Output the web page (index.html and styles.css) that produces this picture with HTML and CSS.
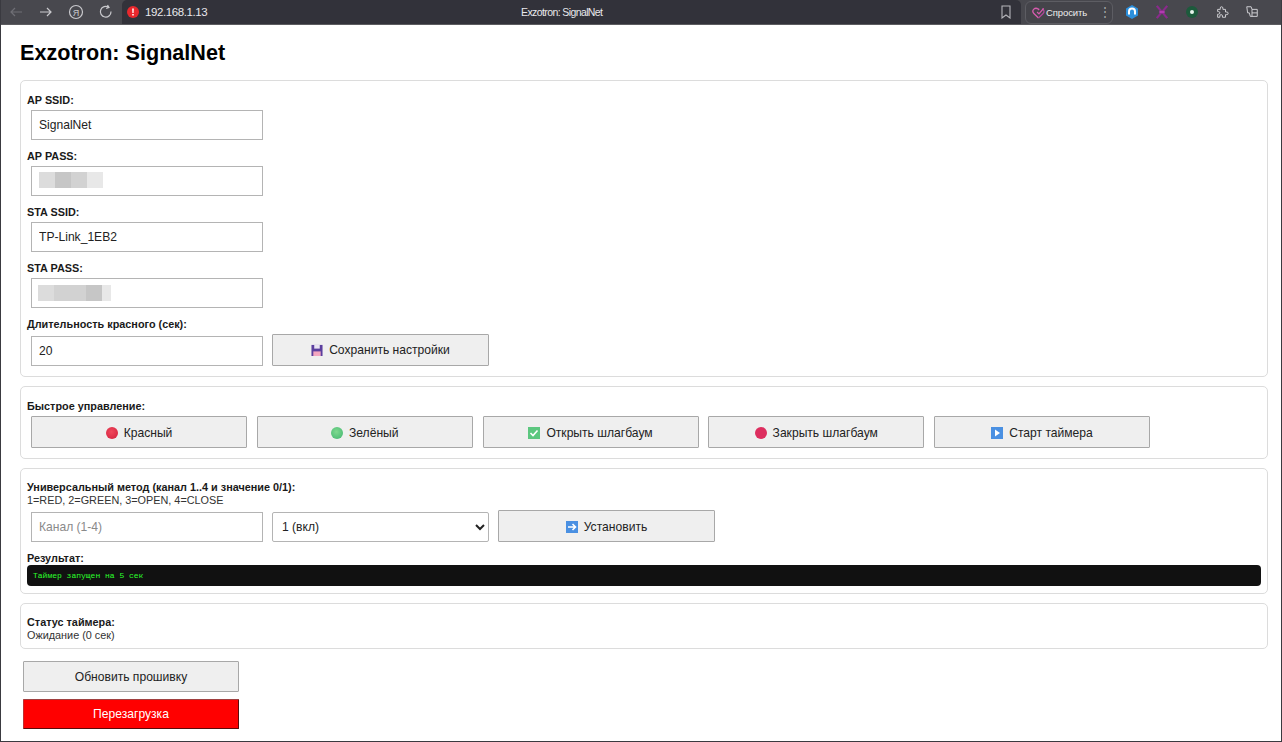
FILE: index.html
```html
<!DOCTYPE html>
<html lang="ru">

<head>
  <meta charset="UTF-8">
  <meta name="viewport" content="width=device-width, initial-scale=1.0">
  <title>Exzotron: SignalNet</title>
  <link rel="stylesheet" href="styles.css">
</head>

<body>
  <header class="toolbar">
    <div class="nav-icons">
      <svg class="nav-icon nav-off" viewBox="0 0 16 16"><path d="M14 8H3M7 4 3 8l4 4"/></svg>
      <svg class="nav-icon" viewBox="0 0 16 16"><path d="M2 8h11M9 4l4 4-4 4"/></svg>
      <svg class="nav-icon" viewBox="0 0 16 16"><circle cx="8" cy="8" r="6.500"/><text class="nav-ya" x="8" y="11.500" text-anchor="middle">Я</text></svg>
      <svg class="nav-icon" viewBox="0 0 16 16"><path d="M13 7.500a5.300 5.300 0 1 1-2.400-4.200M9.500 1l1.500 2.500-2.800 1"/></svg>
    </div>
    <div class="address">
      <div class="address-left">
        <svg class="alert" viewBox="0 0 12 12"><circle cx="6" cy="6" r="6" fill="#e8282d"/><path d="M5.200 2.400h1.600l-.2 4.600H5.400zM5.200 8h1.600v1.600H5.200z" fill="#fff"/></svg>
        <span class="url">192.168.1.13</span>
      </div>
      <span class="page-title">Exzotron: SignalNet</span>
      <svg class="bookmark" viewBox="0 0 12 14"><path d="M2 1h8v12L6 10l-4 3z"/></svg>
    </div>
    <div class="ask">
      <svg class="ask-icon" viewBox="0 0 14 14"><path d="M7 13 2 8a3.200 3.200 0 0 1 4.600-4.600l.4.4.8-.8"/><path d="M11 3a3 3 0 0 1 1 5l-5 5" stroke="#b0479a"/><path d="M5.500 6.500 7.500 8.500 12.500 2.500"/></svg>
      <span class="ask-text">Спросить</span>
      <span class="ask-more">⋮</span>
    </div>
    <div class="ext-icons">
      <svg class="ext" viewBox="0 0 14 14"><path d="M7 0l6 3.500v7L7 14l-6-3.500v-7z" fill="#2b8fdc"/><path d="M4 9.500V6.500a3 3 0 0 1 6 0v3" fill="none" stroke="#fff" stroke-width="2"/></svg>
      <svg class="ext ext-cross" viewBox="0 0 16 16"><path d="M2 1l12 14M14 1 2 15"/><path d="M5 8h6" stroke="#b23bb0"/></svg>
      <svg class="ext" viewBox="0 0 14 14"><circle cx="7" cy="7" r="6" fill="#1d5a3c"/><circle cx="7" cy="7" r="2" fill="#e8f5ec"/></svg>
      <svg class="ext ext-line" viewBox="0 0 16 16"><path d="M3 5h3V3.500a1.500 1.500 0 0 1 3 0V5h3v3h1.500a1.500 1.500 0 0 1 0 3H12v3H8.500v-1.500a1.500 1.500 0 0 0-3 0V14H3v-3.500h1a1.500 1.500 0 0 0 0-3H3z"/></svg>
      <svg class="ext ext-line" viewBox="0 0 16 16"><path d="M2 2h5l1 3h6v8H6L5 9H3zM8 5v8M8 9h6"/></svg>
    </div>
  </header>

  <main class="page">
    <h1 class="title">Exzotron: SignalNet</h1>

    <section class="card card-settings">
      <label class="label">AP SSID:</label>
      <input class="field" type="text" value="SignalNet">
      <label class="label">AP PASS:</label>
      <div class="secret">
        <input class="field" type="text">
        <div class="mosaic mosaic-ap"><i class="m2"></i><i class="m4"></i><i class="m3"></i><i class="m1"></i></div>
      </div>
      <label class="label">STA SSID:</label>
      <input class="field" type="text" value="TP-Link_1EB2">
      <label class="label">STA PASS:</label>
      <div class="secret">
        <input class="field" type="text">
        <div class="mosaic mosaic-sta"><i class="m2"></i><i class="m3"></i><i class="m3"></i><i class="m4"></i><i class="m1 tile-end"></i></div>
      </div>
      <label class="label">Длительность красного (сек):</label>
      <div class="row">
        <input class="field" type="text" value="20">
        <button class="btn btn-wide">
          <svg class="emoji" viewBox="0 0 12 13"><path d="M0 1h12v12H0z" fill="#5b3f9e"/><path d="M3 1h6v4H3z" fill="#e9e4f2"/><path d="M2 8h8v5H2z" fill="#f3a6c0"/></svg>
          Сохранить настройки
        </button>
      </div>
    </section>

    <section class="card card-quick">
      <label class="label">Быстрое управление:</label>
      <div class="row row-quick">
        <button class="btn"><span class="dot dot-red"></span>Красный</button>
        <button class="btn"><span class="dot dot-green"></span>Зелёный</button>
        <button class="btn">
          <svg class="emoji" viewBox="0 0 12 12"><path d="M0 0h12v12H0z" fill="#5cc77f"/><path d="M2.500 6l2.500 2.500 4.500-5" fill="none" stroke="#fff" stroke-width="1.600"/></svg>
          Открыть шлагбаум
        </button>
        <button class="btn"><span class="dot dot-crimson"></span>Закрыть шлагбаум</button>
        <button class="btn">
          <svg class="emoji" viewBox="0 0 12 12"><path d="M0 0h12v12H0z" fill="#4a90e2"/><path d="M4 2.500 9 6l-5 3.500z" fill="#fff"/></svg>
          Старт таймера
        </button>
      </div>
    </section>

    <section class="card card-method">
      <label class="label">Универсальный метод (канал 1..4 и значение 0/1):</label>
      <div class="hint">1=RED, 2=GREEN, 3=OPEN, 4=CLOSE</div>
      <div class="row row-method">
        <input class="field" type="text" placeholder="Канал (1-4)">
        <select class="field field-select">
          <option>1 (вкл)</option>
          <option>0 (выкл)</option>
        </select>
        <button class="btn btn-wide">
          <svg class="emoji" viewBox="0 0 12 12"><path d="M0 0h12v12H0z" fill="#4a90e2"/><path d="M2 6h7M6.500 3 9.500 6l-3 3" fill="none" stroke="#fff" stroke-width="1.600"/></svg>
          Установить
        </button>
      </div>
      <label class="label label-result">Результат:</label>
      <pre class="output">Таймер запущен на 5 сек</pre>
    </section>

    <section class="card card-status">
      <label class="label">Статус таймера:</label>
      <div class="hint">Ожидание (0 сек)</div>
    </section>

    <div class="actions">
      <button class="btn btn-update">Обновить прошивку</button>
      <button class="btn btn-reboot">Перезагрузка</button>
    </div>
  </main>
</body>

</html>
```

FILE: styles.css
```css
* {
  margin: 0;
  padding: 0;
  box-sizing: border-box;
}

html,
body {
  height: 742px;
  overflow: hidden;
}

body {
  font-family: "Liberation Sans", Arial, sans-serif;
  font-size: 12px;
  color: #222;
  background: #fff;
  border-left: 1px solid #3a3a40;
  border-right: 1px solid #3a3a40;
  border-bottom: 1px solid #3a3a40;
}

/* browser bar */
.toolbar {
  display: flex;
  align-items: center;
  height: 25px;
  margin-left: -1px;
  margin-right: -1px;
  background: #48484e;
  border-bottom: 1px solid #5c5c60;
  color: #e4e4e8;
}

.nav-icons {
  display: flex;
  align-items: center;
  gap: 14px;
  width: 122px;
  padding-left: 8px;
  flex-shrink: 0;
}

.nav-icon {
  width: 16px;
  height: 16px;
  flex-shrink: 0;
  fill: none;
  stroke: #c9c9cd;
  stroke-width: 1.200;
}

.nav-off {
  stroke: #6f6f75;
}

.nav-ya {
  fill: #c9c9cd;
  stroke: none;
  font-family: "Liberation Sans", Arial, sans-serif;
  font-size: 9px;
}

.address {
  display: flex;
  align-items: center;
  width: 899px;
  height: 24px;
  padding: 0 9px 0 5px;
  background: #32323a;
  border-radius: 5px 5px 0 0;
  flex-shrink: 0;
}

.address-left {
  display: flex;
  align-items: center;
  gap: 6px;
  width: 394px;
}

.alert {
  width: 12px;
  height: 12px;
}

.url {
  font-size: 11.500px;
  letter-spacing: -0.4px;
  color: #e8e8ec;
}

.page-title {
  font-size: 10.500px;
  letter-spacing: -0.6px;
  color: #e8e8ec;
}

.bookmark {
  width: 12px;
  height: 14px;
  margin-left: auto;
  fill: none;
  stroke: #b5b5ba;
  stroke-width: 1.100;
}

.ask {
  display: flex;
  align-items: center;
  width: 88px;
  height: 23px;
  margin-left: 4px;
  padding-left: 6px;
  border: 1px solid #5d5d63;
  border-radius: 6px;
  background: #44444a;
  flex-shrink: 0;
}

.ask-icon {
  width: 13px;
  height: 13px;
  fill: none;
  stroke: #d65cae;
  stroke-width: 1.400;
}

.ask-text {
  margin-left: 1px;
  font-size: 9.500px;
  letter-spacing: -0.1px;
  color: #eee;
}

.ask-more {
  margin-left: 12px;
  font-size: 12px;
  color: #aaa;
}

.ext-icons {
  display: flex;
  align-items: center;
  gap: 16px;
  margin-left: 12px;
}

.ext {
  width: 14px;
  height: 14px;
  flex-shrink: 0;
}

.ext-cross {
  fill: none;
  stroke: #8a2a8c;
  stroke-width: 2.600;
}

.ext-line {
  fill: none;
  stroke: #d0d0d4;
  stroke-width: 1.100;
}

/* page */
.page {
  padding: 0 13px 0 19px;
}

.title {
  height: 55px;
  font-size: 21.600px;
  line-height: 56px;
  color: #000;
}

.card {
  margin-bottom: 9px;
  padding: 0 6px;
  border: 1px solid #dcdcdc;
  border-radius: 5px;
}

.card-settings {
  height: 297px;
  padding-top: 13px;
}

.card-quick {
  height: 73px;
  padding-top: 13px;
}

.card-method {
  height: 126px;
  padding-top: 12px;
}

.card-status {
  height: 46px;
  padding-top: 12px;
}

.label {
  display: block;
  height: 13px;
  font-size: 10.850px;
  line-height: 13px;
  font-weight: bold;
  color: #1a1a1a;
}

.hint {
  height: 12px;
  font-size: 10.850px;
  line-height: 12px;
  color: #333;
}

.field {
  display: block;
  width: 232px;
  height: 30px;
  margin: 3px 0 10px 4px;
  padding: 0 7px;
  border: 1px solid #b4b4b4;
  background: #fff;
  font-family: "Liberation Sans", Arial, sans-serif;
  font-size: 12.100px;
  color: #222;
}

.field::placeholder {
  color: #8a8a8a;
}

.secret {
  position: relative;
}

.mosaic {
  position: absolute;
  top: 6px;
  display: flex;
}

.mosaic-ap {
  left: 12px;
}

.mosaic-sta {
  top: 7px;
  left: 11px;
}

.mosaic i {
  display: block;
  width: 16px;
  height: 16px;
}

.mosaic .tile-end {
  width: 9px;
}

.m1 {
  background: #e8e8e8;
}

.m2 {
  background: #dcdcdc;
}

.m3 {
  background: #d2d2d2;
}

.m4 {
  background: #c6c6c6;
}

.row {
  display: flex;
  align-items: flex-end;
  gap: 9px;
  margin-top: 3px;
  padding-left: 4px;
}

.row .field {
  margin: 0;
  flex-shrink: 0;
}

.row-quick {
  gap: 9.750px;
}

.row-quick .btn,
.row-method .btn {
  padding-top: 2px;
}

.row-method {
  margin-top: 4px;
}

.btn {
  display: flex;
  align-items: center;
  justify-content: center;
  gap: 6px;
  width: 216px;
  height: 32px;
  border: 1px solid #a8a8a8;
  border-radius: 1px;
  background: #efefef;
  font-family: "Liberation Sans", Arial, sans-serif;
  font-size: 12.100px;
  color: #222;
  flex-shrink: 0;
}

.btn-wide {
  width: 217px;
}

.field-select {
  width: 217px;
  padding-left: 5px;
  border-radius: 2px;
}

.emoji {
  width: 12px;
  height: 12px;
}

.dot {
  width: 12px;
  height: 12px;
  border-radius: 50%;
}

.dot-red {
  background: radial-gradient(circle at 45% 40%, #f0485c, #d21f3c);
}

.dot-green {
  background: radial-gradient(circle at 45% 40%, #7fd98f, #3fb56f);
}

.dot-crimson {
  background: #dd2e5f;
}

.label-result {
  margin-top: 10px;
}

.output {
  height: 21px;
  padding: 0 6px;
  border-radius: 4px;
  background: #111;
  color: #2bff2b;
  font-family: "Liberation Mono", "Courier New", monospace;
  font-size: 8px;
  line-height: 21px;
}

.actions {
  display: flex;
  flex-direction: column;
  gap: 7px;
  padding: 3px 0 0 3px;
}

.btn-update {
  height: 31px;
}

.btn-reboot {
  height: 30px;
  background: #ff0000;
  color: #fff;
  border: 1px solid #5a0a0a;
  border-top-color: #a04040;
  border-left-color: #c03030;
}
```
